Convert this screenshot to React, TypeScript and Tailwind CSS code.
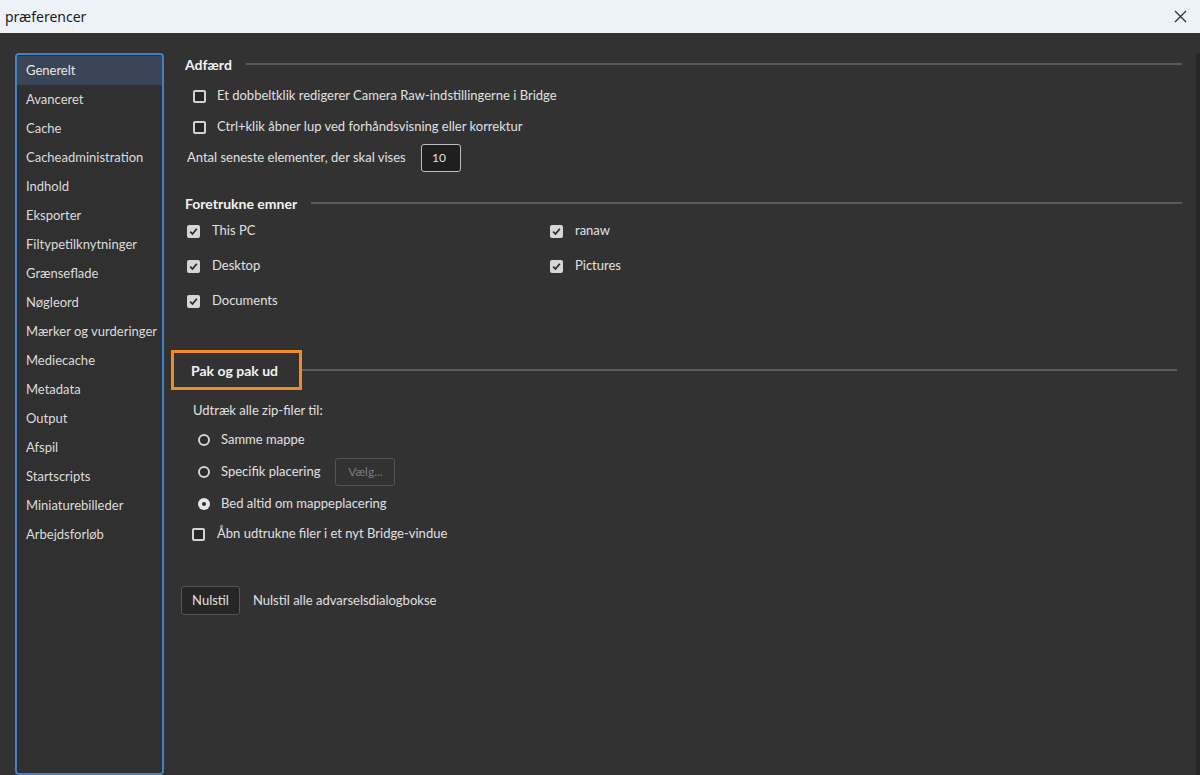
import React from 'react';

const navItems = [
  'Generelt',
  'Avanceret',
  'Cache',
  'Cacheadministration',
  'Indhold',
  'Eksporter',
  'Filtypetilknytninger',
  'Grænseflade',
  'Nøgleord',
  'Mærker og vurderinger',
  'Mediecache',
  'Metadata',
  'Output',
  'Afspil',
  'Startscripts',
  'Miniaturebilleder',
  'Arbejdsforløb',
];

const CheckBox: React.FC<{ checked?: boolean }> = ({ checked }) =>
  checked ? (
    <span className="w-[13px] h-[13px] rounded-[2px] bg-[#d6d6d6] flex items-center justify-center shrink-0">
      <svg width="9" height="9" viewBox="0 0 9 9">
        <path d="M1.2 4.6 L3.5 7 L7.8 1.8" fill="none" stroke="#2b2b2b" strokeWidth="1.8" />
      </svg>
    </span>
  ) : (
    <span className="w-[13px] h-[13px] rounded-[2px] border-2 border-[#d2d2d2] bg-[#262626] shrink-0" />
  );

const Radio: React.FC<{ checked?: boolean }> = ({ checked }) =>
  checked ? (
    <span className="w-[12px] h-[12px] rounded-full bg-[#e6e6e6] flex items-center justify-center shrink-0">
      <span className="w-[4px] h-[4px] rounded-full bg-[#2b2b2b]" />
    </span>
  ) : (
    <span className="w-[12px] h-[12px] rounded-full border-2 border-[#d2d2d2] bg-[#2b2b2b] shrink-0" />
  );

const SectionHead: React.FC<{ title: string; className?: string }> = ({ title, className }) => (
  <div className={'h-[22px] flex items-center ' + (className || '')}>
    <span className="text-[14px] font-bold text-[#f2f2f2]">{title}</span>
    <span className="flex-1 h-[2px] bg-[#5a5a5a] ml-[14px]" />
  </div>
);

const App: React.FC = () => {
  return (
    <div
      className="w-[1200px] h-[775px] flex flex-col bg-[#323232] overflow-hidden text-[13px] text-[#e0e0e0]"
      style={{ fontFamily: 'Lato, "Open Sans", sans-serif' }}
    >
      <div className="h-[33px] shrink-0 bg-[#eef2f9] flex items-center justify-between pl-[5px] pr-[13px]">
        <span className="text-[14px] text-[#1a1a1a]" style={{ fontFamily: '"Noto Sans", sans-serif' }}>
          præferencer
        </span>
        <svg width="13" height="13" viewBox="0 0 13 13">
          <path d="M1 1 L12 12 M12 1 L1 12" stroke="#333" strokeWidth="1.3" />
        </svg>
      </div>

      <div className="flex flex-1 pt-[20px] pl-[15px]">
        <div className="w-[149px] h-[722px] border-2 border-[#3f80c8] rounded-[4px] pt-[1px] bg-[#303030]">
          {navItems.map((item, i) => (
            <div
              key={item}
              className={
                'h-[29px] flex items-center pl-[9px] whitespace-nowrap ' +
                (i === 0 ? 'bg-[#3a4657] text-[#e8e8e8]' : 'text-[#dcdcdc]')
              }
            >
              {item}
            </div>
          ))}
        </div>

        <div className="flex-1 pl-[21px] pr-[14px] flex flex-col">
          <SectionHead title="Adfærd" />
          <div className="mt-[8px] h-[26px] flex items-center pl-[8px] gap-[11px]">
            <CheckBox />
            <span>Et dobbeltklik redigerer Camera Raw-indstillingerne i Bridge</span>
          </div>
          <div className="mt-[5px] h-[26px] flex items-center pl-[8px] gap-[11px]">
            <CheckBox />
            <span>Ctrl+klik åbner lup ved forhåndsvisning eller korrektur</span>
          </div>
          <div className="mt-[4px] h-[28px] flex items-center pl-[2px]">
            <span className="w-[234px]">Antal seneste elementer, der skal vises</span>
            <div className="w-[40px] h-[28px] border border-[#bdbdbd] rounded-[3px] bg-[#1f1f1f] flex items-center pl-[10px] text-[12px]">
              10
            </div>
          </div>

          <SectionHead title="Foretrukne emner" className="mt-[20px]" />
          <div className="mt-[4px] grid grid-cols-[363px_1fr] gap-y-[9px] pl-[2px]">
            {[
              ['This PC', 'ranaw'],
              ['Desktop', 'Pictures'],
              ['Documents', ''],
            ].map(([a, b]) => (
              <React.Fragment key={a}>
                <div className="h-[26px] flex items-center gap-[12px]">
                  <CheckBox checked />
                  <span>{a}</span>
                </div>
                <div className="h-[26px] flex items-center gap-[12px]">
                  {b && (
                    <>
                      <CheckBox checked />
                      <span>{b}</span>
                    </>
                  )}
                </div>
              </React.Fragment>
            ))}
          </div>

          <div className="mt-[36px] -ml-[14px] flex items-center pr-[5px]">
            <div className="w-[131px] h-[40px] border-[3px] border-[#f28a26] flex items-center pl-[17px]">
              <span className="text-[14px] font-bold text-[#f2f2f2]">Pak og pak ud</span>
            </div>
            <span className="flex-1 h-[2px] bg-[#5a5a5a]" />
          </div>

          <div className="mt-[11px] h-[20px] flex items-center pl-[8px]">Udtræk alle zip-filer til:</div>
          <div className="mt-[5px] h-[28px] flex items-center pl-[13px] gap-[11px]">
            <Radio />
            <span>Samme mappe</span>
          </div>
          <div className="mt-[4px] h-[28px] flex items-center pl-[13px] gap-[11px]">
            <Radio />
            <span>Specifik placering</span>
            <div className="ml-[4px] w-[60px] h-[28px] border border-[#555] rounded-[3px] flex items-center justify-center text-[#7c7c7c] text-[12px]">
              Vælg...
            </div>
          </div>
          <div className="mt-[4px] h-[28px] flex items-center pl-[13px] gap-[11px]">
            <Radio checked />
            <span>Bed altid om mappeplacering</span>
          </div>
          <div className="mt-[3px] h-[26px] flex items-center pl-[7px] gap-[12px]">
            <CheckBox />
            <span>Åbn udtrukne filer i et nyt Bridge-vindue</span>
          </div>

          <div className="mt-[39px] -ml-[4px] h-[29px] flex items-center gap-[13px]">
            <div className="w-[59px] h-[29px] border border-[#555] rounded-[3px] bg-[#262626] flex items-center justify-center">
              Nulstil
            </div>
            <span>Nulstil alle advarselsdialogbokse</span>
          </div>
        </div>
        <div className="w-[4px] bg-[#262626]" />
      </div>
    </div>
  );
};

export default App;
